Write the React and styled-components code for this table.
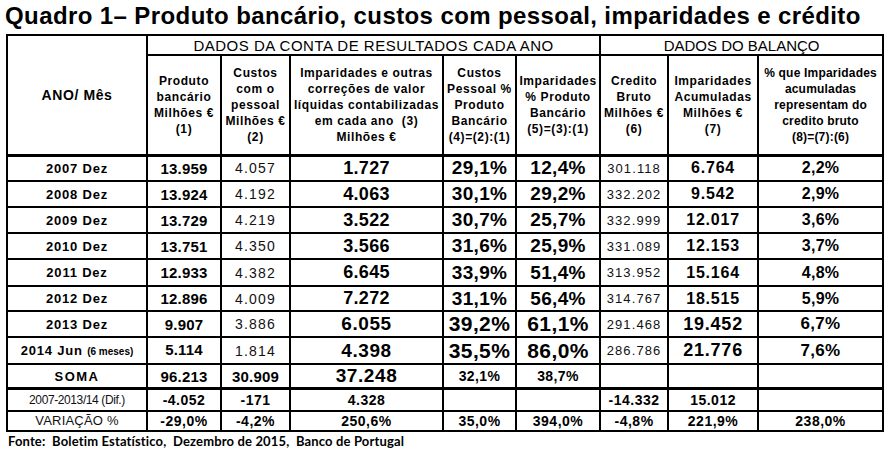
import React from "react"
import styled, { createGlobalStyle } from "styled-components"

const GlobalStyle = createGlobalStyle`
  body {
    margin: 0;
    background: #fff;
    color: #000;
    font-family: "Liberation Sans", Arial, sans-serif;
  }
`

const Page = styled.div`
  width: 893px;
  height: 455px;
  padding: 2px 0 0 5px;
  box-sizing: border-box;
  overflow: hidden;
`

const Title = styled.h1`
  margin: 0;
  font-size: 24px;
  line-height: 28px;
  font-weight: 700;
  letter-spacing: 0.4px;
  white-space: nowrap;
`

const Table = styled.table`
  margin: 4px 0 0 1px;
  border-collapse: collapse;
  table-layout: fixed;
  width: 877px;
  td,
  th {
    border: 2px solid #000;
    padding: 0;
    text-align: center;
    vertical-align: middle;
    white-space: nowrap;
    overflow: hidden;
  }
`

const Row = styled.tr`
  height: ${p => p.$h}px;
  ${p => p.$thick && "td { border-bottom-width: 3px; }"}
`

const CornerHead = styled.th`
  font-size: 14px;
  font-weight: 700;
  letter-spacing: 0.6px;
  border-bottom-width: 3px !important;
`

const GroupHead = styled.th`
  font-size: 15px;
  font-weight: 400;
  letter-spacing: ${p => p.$ls || 0}px;
`

const ColHead = styled.th`
  font-size: 12px;
  font-weight: 700;
  line-height: 16px;
  white-space: pre !important;
  letter-spacing: ${p => (p.$ls === undefined ? 0.6 : p.$ls)}px;
  border-bottom-width: 3px !important;
`

const Cell = styled.td`
  font-size: ${p => p.$size}px;
  font-weight: ${p => p.$weight};
  letter-spacing: ${p => p.$ls}px;
  color: ${p => (p.$weight === 400 ? "#111" : "#000")};
  vertical-align: ${p => (p.$top ? "top" : "middle")} !important;
  padding-top: ${p => (p.$top ? "3px" : "0")} !important;
`

const Small = styled.span`
  font-size: 10px;
  letter-spacing: 0;
`

const Footer = styled.p`
  margin: 1px 0 0 3px;
  font-family: Lato, "Open Sans", sans-serif;
  font-size: 13px;
  font-weight: 700;
  letter-spacing: 0.15px;
  white-space: pre;
`

const V = {
  label: { size: 13, weight: 700, ls: 0.8 },
  labelSm: { size: 12, weight: 400, ls: -0.4 },
  labelReg: { size: 13, weight: 400, ls: 0.2 },
  soma: { size: 13, weight: 700, ls: 1.5 },
  num: { size: 15, weight: 700, ls: 0.2 },
  light: { size: 14, weight: 400, ls: 1.2 },
  lightSm: { size: 13, weight: 400, ls: 1.1 },
  large: { size: 18, weight: 700, ls: 0.3 },
  larger: { size: 19, weight: 700, ls: 0.6 },
  pct: { size: 19, weight: 700, ls: 0.3 },
  pctBig: { size: 21, weight: 700, ls: 0.4 },
  mid: { size: 16, weight: 700, ls: 0.8 },
  midBig: { size: 18, weight: 700, ls: 0.8 },
  pctMid: { size: 16, weight: 700, ls: 0.3 },
  pctMidBig: { size: 17, weight: 700, ls: 0.3 },
  foot: { size: 15, weight: 700, ls: 0.2 },
  footPct: { size: 14, weight: 700, ls: 0.4 },
  footSm: { size: 14, weight: 700, ls: 0.5 },
}

const normal = ["label", "num", "light", "large", "pct", "pct", "lightSm", "mid", "pctMid"]
const strong = ["label", "num", "light", "larger", "pctBig", "pctBig", "lightSm", "midBig", "pctMidBig"]
const plain = ["footSm", "footSm", "footSm", "footSm", "footSm", "footSm", "footSm", "footSm"]

const rows = [
  { h: 26, kinds: normal, cells: ["2007 Dez", "13.959", "4.057", "1.727", "29,1%", "12,4%", "301.118", "6.764", "2,2%"] },
  { h: 26, kinds: normal, cells: ["2008 Dez", "13.924", "4.192", "4.063", "30,1%", "29,2%", "332.202", "9.542", "2,9%"] },
  { h: 26, kinds: normal, cells: ["2009 Dez", "13.729", "4.219", "3.522", "30,7%", "25,7%", "332.999", "12.017", "3,6%"] },
  { h: 26, kinds: normal, cells: ["2010 Dez", "13.751", "4.350", "3.566", "31,6%", "25,9%", "331.089", "12.153", "3,7%"] },
  { h: 27, kinds: normal, cells: ["2011 Dez", "12.933", "4.382", "6.645", "33,9%", "51,4%", "313.952", "15.164", "4,8%"] },
  { h: 25, kinds: normal, cells: ["2012 Dez", "12.896", "4.009", "7.272", "31,1%", "56,4%", "314.767", "18.515", "5,9%"] },
  { h: 26, kinds: strong, cells: ["2013 Dez", "9.907", "3.886", "6.055", "39,2%", "61,1%", "291.468", "19.452", "6,7%"] },
  {
    h: 27,
    kinds: strong,
    top: 1,
    cells: [
      <>
        2014 Jun <Small>(6 meses)</Small>
      </>,
      "5.114", "1.814", "4.398", "35,5%", "86,0%", "286.786", "21.776", "7,6%",
    ],
  },
  {
    h: 24,
    thick: true,
    kinds: ["soma", "foot", "foot", "larger", "footPct", "footPct", "foot", "foot", "foot"],
    cells: ["SOMA", "96.213", "30.909", "37.248", "32,1%", "38,7%", "", "", ""],
  },
  {
    h: 22,
    kinds: ["labelSm", ...plain],
    cells: ["2007-2013/14 (Dif.)", "-4.052", "-171", "4.328", "", "", "-14.332", "15.012", ""],
  },
  {
    h: 20,
    kinds: ["labelReg", ...plain],
    cells: ["VARIAÇÃO %", "-29,0%", "-4,2%", "250,6%", "35,0%", "394,0%", "-4,8%", "221,9%", "238,0%"],
  },
]

const widths = [140, 74, 69, 153, 73, 84, 68, 90, 125]

const headers = [
  ["Produto", "bancário", "Milhões €", "(1)"],
  ["Custos", "com o", "pessoal", "Milhões €", "(2)"],
  ["Imparidades e outras", "correções de valor", "líquidas contabilizadas", "em cada ano  (3)", "Milhões €"],
  ["Custos", "Pessoal %", "Produto", "Bancário", "(4)=(2):(1)"],
  ["Imparidades", "% Produto", "Bancário", "(5)=(3):(1)"],
  ["Credito", "Bruto", "Milhões €", "(6)"],
  ["Imparidades", "Acumuladas", "Milhões €", "(7)"],
  ["% que Imparidades", "acumuladas", "representam do", "credito bruto", "(8)=(7):(6)"],
]

const App = () => (
  <Page>
    <GlobalStyle />
    <Title>Quadro 1– Produto bancário, custos com pessoal, imparidades e crédito</Title>
    <Table>
      <colgroup>
        {widths.map((w, i) => (
          <col key={i} style={{ width: w }} />
        ))}
      </colgroup>
      <thead>
        <Row $h={20}>
          <CornerHead rowSpan={2}>ANO/ Mês</CornerHead>
          <GroupHead colSpan={5} $ls={0.5}>
            DADOS DA CONTA DE RESULTADOS CADA ANO
          </GroupHead>
          <GroupHead colSpan={3}>DADOS DO BALANÇO</GroupHead>
        </Row>
        <Row $h={100}>
          {headers.map((lines, i) => (
            <ColHead key={i} $ls={i === 7 ? 0.2 : 0.6}>
              {lines.map((l, j) => (
                <React.Fragment key={j}>
                  {j > 0 && <br />}
                  {l}
                </React.Fragment>
              ))}
            </ColHead>
          ))}
        </Row>
      </thead>
      <tbody>
        {rows.map((r, i) => (
          <Row key={i} $h={r.h} $thick={r.thick}>
            {r.cells.map((c, j) => {
              const v = V[r.kinds[j]]
              return (
                <Cell key={j} $size={v.size} $weight={v.weight} $ls={v.ls} $top={r.top && j === 1}>
                  {c}
                </Cell>
              )
            })}
          </Row>
        ))}
      </tbody>
    </Table>
    <Footer>{"Fonte:  Boletim Estatístico,  Dezembro de 2015,  Banco de Portugal"}</Footer>
  </Page>
)

export default App
